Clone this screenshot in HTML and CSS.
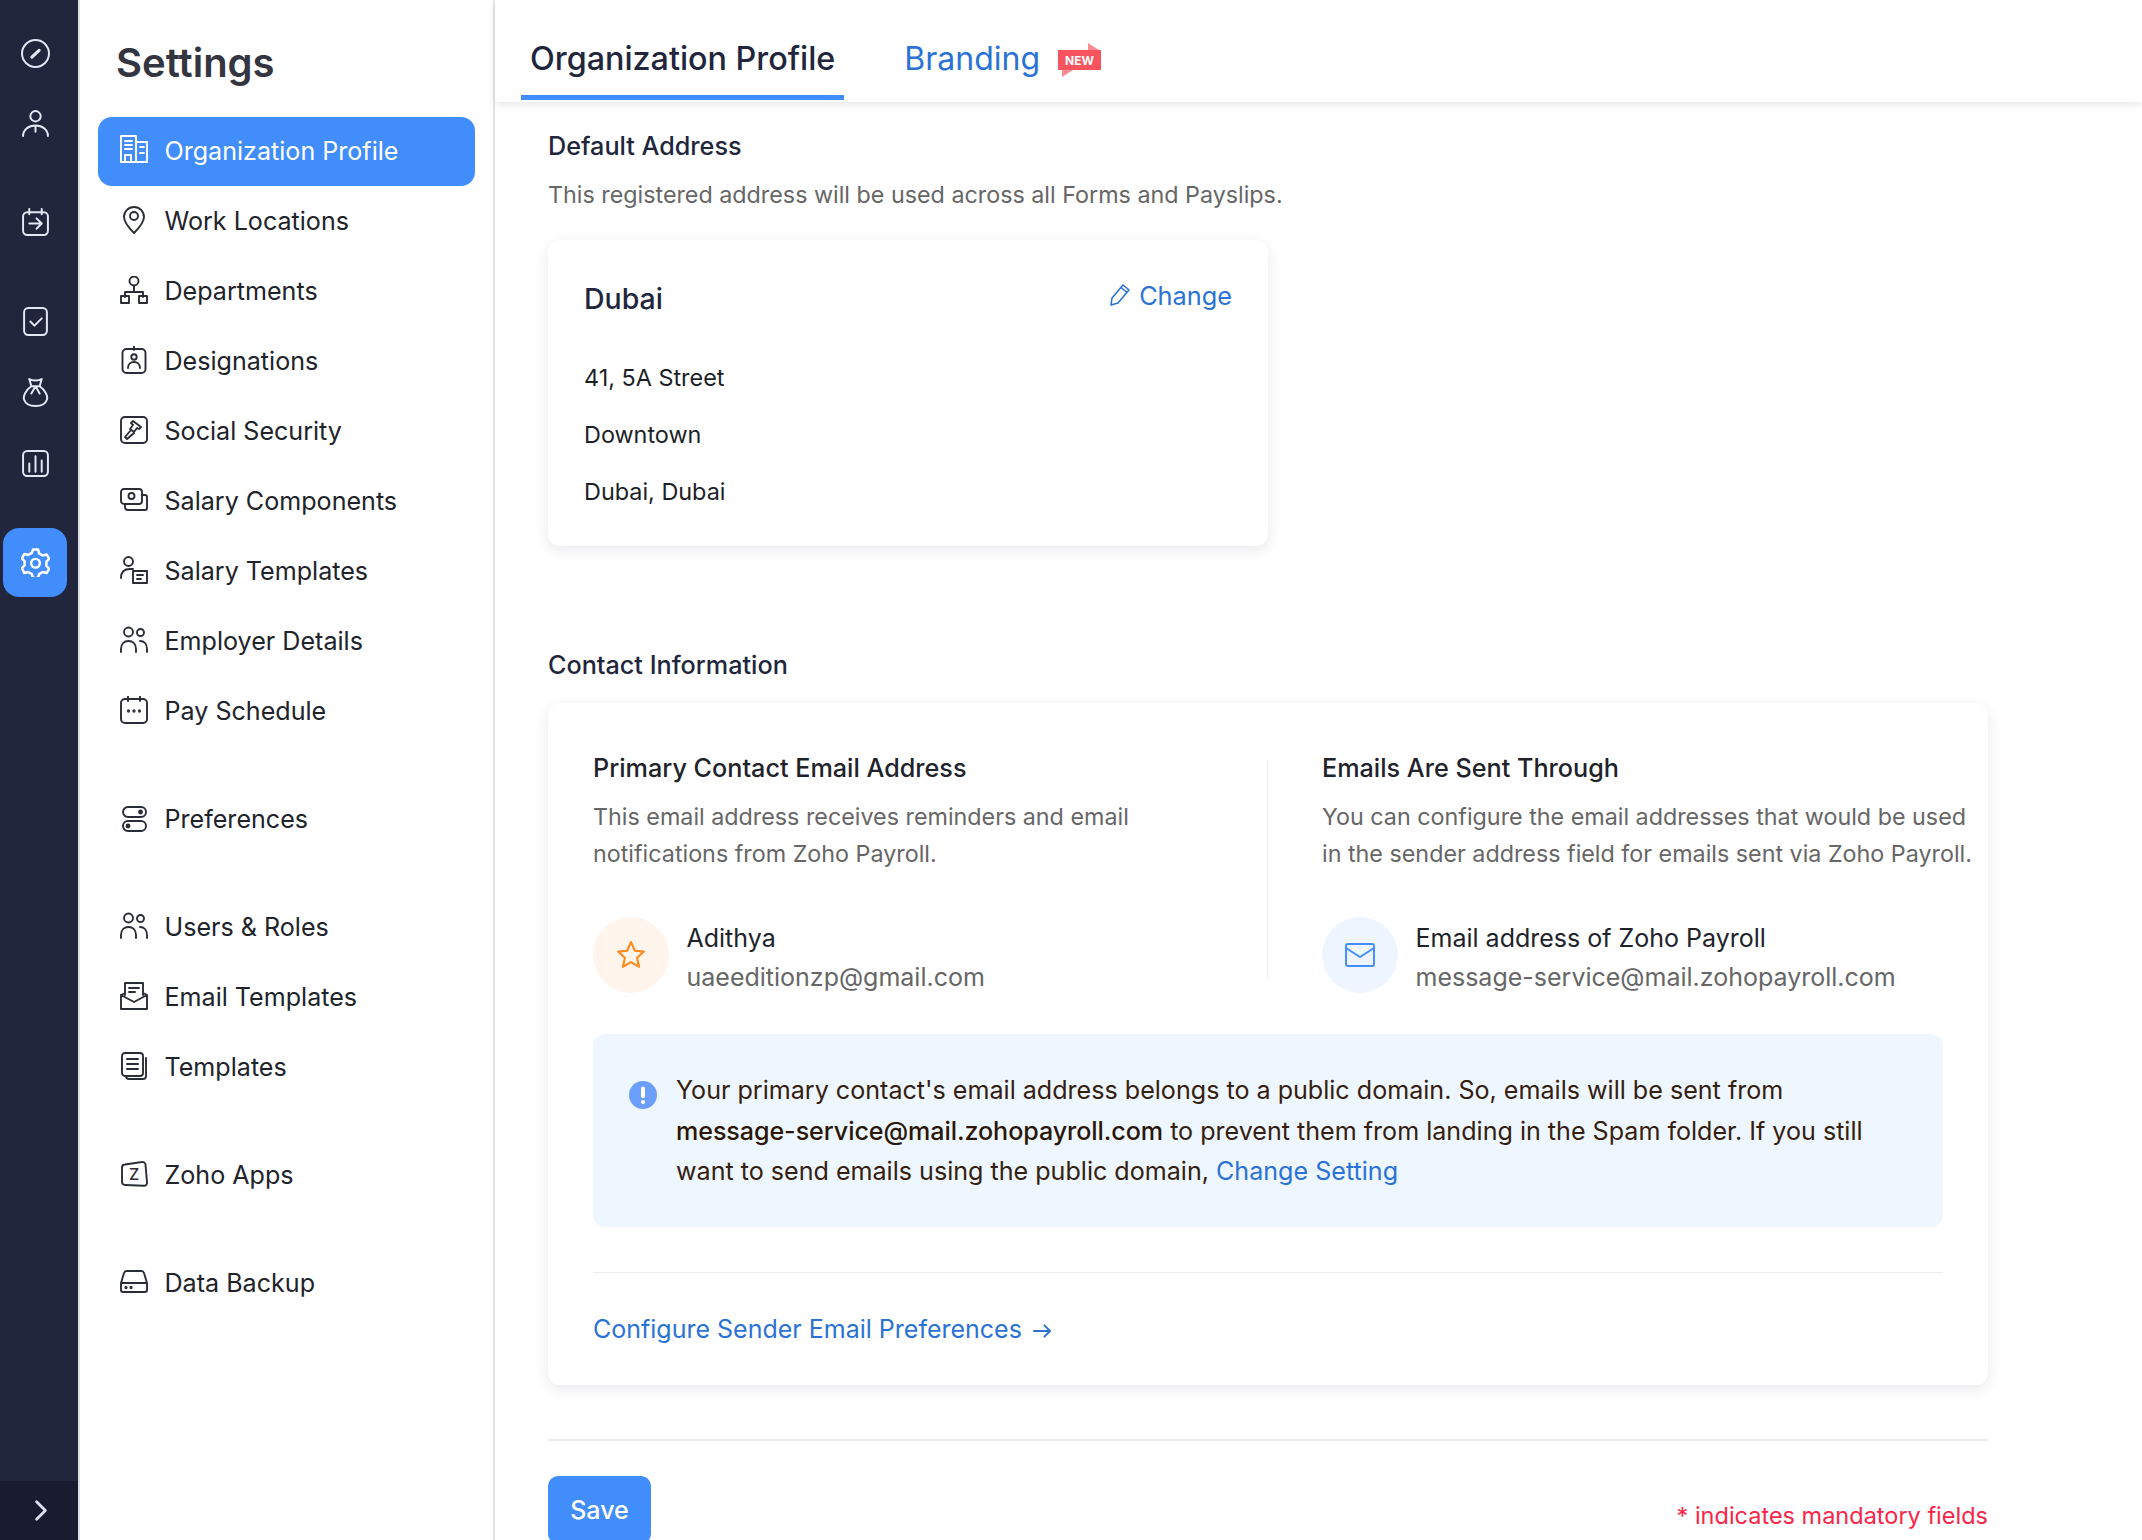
FILE: index.html
```html
<!DOCTYPE html>
<html lang="en">
<head>
<meta charset="utf-8">
<title>Settings</title>
<link rel="stylesheet" href="styles.css">
</head>
<body>
<div class="app">
  <aside class="rail">
    <div class="rail-group">
      <div class="rail-item"><svg viewBox="0 0 28 28"><circle cx="14" cy="14" r="13"/><path d="M10.5 17.500 17.500 11" class="thick"/></svg></div>
      <div class="rail-item"><svg viewBox="0 0 28 28"><circle cx="14" cy="7" r="5"/><path d="M2 26c0-6 5-10 12-10s12 4 12 10M14 16v6"/></svg></div>
    </div>
    <div class="rail-group">
      <div class="rail-item"><svg viewBox="0 0 28 28"><rect x="2" y="4" width="24" height="22" rx="4"/><path d="M8 1v5M20 1v5M8 15h12M15 10l5 5-5 5"/></svg></div>
    </div>
    <div class="rail-group rail-group-tall">
      <div class="rail-item"><svg viewBox="0 0 28 28"><rect x="3" y="1" width="22" height="26" rx="4"/><path d="M9 14l4 4 7-7"/></svg></div>
      <div class="rail-item"><svg viewBox="0 0 28 28"><path d="M8 1c3 2 9 2 12 0l-2 7c6 4 8 10 7 13s-4 6-11 6-10-3-11-6 1-9 7-13zM10 8h8M14 8l-4 7M14 8l4 7"/></svg></div>
      <div class="rail-item"><svg viewBox="0 0 28 28"><rect x="2" y="2" width="24" height="24" rx="4"/><path d="M8 22v-8M14 22V7M20 22V11"/></svg></div>
    </div>
    <div class="rail-group">
      <div class="rail-item rail-active"><svg viewBox="0 0 28 28"><path d="M11.5 1.500h5l1 3.700 3.500 2 3.700-1 2.500 4.300-2.700 2.700v4l2.700 2.700-2.500 4.300-3.700-1-3.500 2-1 3.700h-5l-1-3.700-3.500-2-3.700 1L.8 19.400l2.700-2.700v-4L.8 10l2.500-4.300 3.700 1 3.500-2z"/><circle cx="14" cy="14.700" r="4.200"/></svg></div>
    </div>
    <div class="rail-foot"><svg viewBox="0 0 16 24"><path d="M3 2l10 10L3 22"/></svg></div>
  </aside>

  <nav class="panel">
    <h1 class="panel-title">Settings</h1>
    <div class="nav-group">
      <a class="nav-item nav-active"><svg viewBox="0 0 28 28"><path d="M1 27V1h15v26M16 7h11v20H1M5 6h7M5 10h7M5 14h7M20 12h4M20 18h4M5 27v-7h6v7"/></svg>Organization Profile</a>
      <a class="nav-item"><svg viewBox="0 0 28 28"><path d="M14 27C9 22 4 16 4 11a10 10 0 0 1 20 0c0 5-5 11-10 16z"/><circle cx="14" cy="10" r="4"/></svg>Work Locations</a>
      <a class="nav-item"><svg viewBox="0 0 28 28"><circle cx="14" cy="5" r="4.500"/><path d="M14 10v6M5 21v-5h18v5"/><rect x="1" y="20" width="8" height="7"/><rect x="19" y="20" width="8" height="7"/></svg>Departments</a>
      <a class="nav-item"><svg viewBox="0 0 28 28"><rect x="2.500" y="3" width="23" height="24" rx="4"/><path d="M14 0v4M8 22c0-4 3-6 6-6s6 2 6 6"/><circle cx="14" cy="11" r="2.700"/></svg>Designations</a>
      <a class="nav-item"><svg viewBox="0 0 28 28"><rect x="1" y="1" width="26" height="26" rx="4"/><path d="M13 5l8 6-2 2-2-1-3 4-4-3 3-4-2-2zM11 14l-6 7 2 2 7-6"/></svg>Social Security</a>
      <a class="nav-item"><svg viewBox="0 0 28 28"><rect x="1" y="3" width="21" height="15" rx="3"/><circle cx="11.500" cy="10" r="3"/><path d="M22 9h3a2 2 0 0 1 2 2v11a2 2 0 0 1-2 2H8a3 3 0 0 1-3-3v-3"/></svg>Salary Components</a>
      <a class="nav-item"><svg viewBox="0 0 28 28"><circle cx="8.500" cy="5.500" r="4.500"/><path d="M1 22c0-6 3-9 9-9h3"/><rect x="13" y="15" width="14" height="12"/><path d="M17 19h6M17 23h4"/></svg>Salary Templates</a>
      <a class="nav-item"><svg viewBox="0 0 28 28"><circle cx="8.500" cy="6" r="4.500"/><circle cx="20.500" cy="6.500" r="3.500"/><path d="M1 26v-3c0-5 3-8 7.500-8s7.500 3 7.500 8v3M20 15c4 0 7 3 7 8v3"/></svg>Employer Details</a>
      <a class="nav-item"><svg viewBox="0 0 28 28"><rect x="1" y="3" width="26" height="24" rx="4"/><path d="M8 0v5M20 0v5"/><circle cx="8.500" cy="15" r=".7"/><circle cx="14" cy="15" r=".7"/><circle cx="19.500" cy="15" r=".7"/></svg>Pay Schedule</a>
    </div>
    <div class="nav-group">
      <a class="nav-item"><svg viewBox="0 0 28 28"><rect x="3" y="3" width="23" height="10" rx="5"/><rect x="3" y="17" width="23" height="10" rx="5"/><circle cx="20.500" cy="8" r="1.500" class="fill"/><circle cx="8" cy="22" r="1.500" class="fill"/></svg>Preferences</a>
    </div>
    <div class="nav-group">
      <a class="nav-item"><svg viewBox="0 0 28 28"><circle cx="8.500" cy="6" r="4.500"/><circle cx="20.500" cy="6.500" r="3.500"/><path d="M1 26v-3c0-5 3-8 7.500-8s7.500 3 7.500 8v3M20 15c4 0 7 3 7 8v3"/></svg>Users &amp; Roles</a>
      <a class="nav-item"><svg viewBox="0 0 28 28"><path d="M5 13V1h18v12M1 13v14h26V13l-4-2M5 11l-4 2M1 13l13 7 13-7M9 6h10M9 10h6"/></svg>Email Templates</a>
      <a class="nav-item"><svg viewBox="0 0 28 28"><rect x="2" y="1" width="21" height="23" rx="3"/><path d="M7 7h11M7 12h11M7 17h11M26 6v18a3 3 0 0 1-3 3H9a3 3 0 0 1-3-3"/></svg>Templates</a>
    </div>
    <div class="nav-group">
      <a class="nav-item"><svg viewBox="0 0 28 28"><path d="M5 4.500 22 2a3 3 0 0 1 3.500 2.500l1.500 18a3 3 0 0 1-3 3.300L5 25a3 3 0 0 1-3-3L2 7a3 3 0 0 1 3-2.500z"/><text x="14" y="20" class="zed">Z</text></svg>Zoho Apps</a>
    </div>
    <div class="nav-group">
      <a class="nav-item"><svg viewBox="0 0 28 28"><path d="M1 15v7a2 2 0 0 0 2 2h22a2 2 0 0 0 2-2v-7L24 5a3 3 0 0 0-3-2H7a3 3 0 0 0-3 2zM1 15h26"/><circle cx="6" cy="19.500" r=".7"/><circle cx="11" cy="19.500" r=".7"/></svg>Data Backup</a>
    </div>
  </nav>

  <main class="main">
    <header class="tabs">
      <a class="tab tab-active">Organization Profile</a>
      <a class="tab tab-link">Branding</a>
      <svg class="new-badge" viewBox="0 0 43 36"><path d="M30 8V1l11 7zM4 28v7l11-7z" class="badge-fold"/><rect y="8" width="43" height="20" class="badge-body"/><text x="21.500" y="23" class="badge-text">NEW</text></svg>
    </header>

    <div class="content">
      <h2 class="section-title">Default Address</h2>
      <p class="section-desc">This registered address will be used across all Forms and Payslips.</p>

      <section class="card address-card">
        <div class="address-head">
          <span class="address-name">Dubai</span>
          <a class="change-link"><svg viewBox="0 0 24 24"><path d="M3 22l1-7L15 2l6 5L10 20zM13 4.500l6 5"/></svg>Change</a>
        </div>
        <div class="address-lines">
          <div>41, 5A Street</div>
          <div>Downtown</div>
          <div>Dubai, Dubai</div>
        </div>
      </section>

      <h2 class="section-title contact-title">Contact Information</h2>

      <section class="card contact-card">
        <div class="contact-cols">
          <div class="contact-col">
            <h3 class="col-title">Primary Contact Email Address</h3>
            <p class="col-desc">This email address receives reminders and email<br>notifications from Zoho Payroll.</p>
            <div class="person">
              <span class="avatar avatar-star"><svg viewBox="0 0 28 28"><path d="M14 2l3.600 8 8.400.8-6.300 5.700 1.800 8.500L14 20.600 6.500 25l1.800-8.500L2 10.800l8.400-.8z"/></svg></span>
              <div class="person-text">
                <div class="person-name">Adithya</div>
                <div class="person-mail">uaeeditionzp@gmail.com</div>
              </div>
            </div>
          </div>
          <div class="col-rule"></div>
          <div class="contact-col contact-col-right">
            <h3 class="col-title">Emails Are Sent Through</h3>
            <p class="col-desc">You can configure the email addresses that would be used<br>in the sender address field for emails sent via Zoho Payroll.</p>
            <div class="person">
              <span class="avatar avatar-mail"><svg viewBox="0 0 30 26"><rect x="1" y="2" width="28" height="22" rx="2"/><path d="M1 6l14 9 14-9"/></svg></span>
              <div class="person-text">
                <div class="person-name">Email address of Zoho Payroll</div>
                <div class="person-mail">message-service@mail.zohopayroll.com</div>
              </div>
            </div>
          </div>
        </div>

        <div class="notice">
          <svg class="notice-icon" viewBox="0 0 28 28"><circle cx="14" cy="14" r="14"/><rect x="12" y="5.500" width="4" height="11.500" rx="2"/><circle cx="14" cy="21" r="2.100"/></svg>
          <p class="notice-text">Your primary contact's email address belongs to a public domain. So, emails will be sent from<br><strong>message-service@mail.zohopayroll.com</strong> to prevent them from landing in the Spam folder. If you still<br>want to send emails using the public domain, <a class="link">Change Setting</a></p>
        </div>

        <div class="card-foot">
          <a class="link configure">Configure Sender Email Preferences<svg viewBox="0 0 20 16"><path d="M1 8h17M12 2l6 6-6 6"/></svg></a>
        </div>
      </section>

      <div class="actions">
        <button class="save">Save</button>
        <span class="mandatory">* indicates mandatory fields</span>
      </div>
    </div>
  </main>
</div>
</body>
</html>
```

FILE: styles.css
```css
* { box-sizing: border-box; }
html, body { margin: 0; height: 1540px; overflow: hidden; background: #fff; }
body { font-family: Inter, "Liberation Sans", sans-serif; color: #21263c; }
h1, h2, h3, p { margin: 0; }
svg { display: block; fill: none; stroke: currentColor; stroke-width: 1.9; stroke-linecap: round; stroke-linejoin: round; flex: none; }

.app { display: flex; height: 1540px; }

/* icon rail */
.rail { width: 80px; flex: none; height: 100%; background: #21263c; border-right: 2px solid #dfe1e6; display: flex; flex-direction: column; padding-top: 18px; color: #e3e8f5; position: relative; }
.rail-group { display: flex; flex-direction: column; margin-bottom: 29px; }
.rail-item { width: 70px; height: 70px; display: flex; align-items: center; justify-content: center; }
.rail-group-tall .rail-item { height: 71px; }
.rail-item svg { width: 29px; height: 29px; stroke-width: 1.9; }
.rail-item .thick { stroke-width: 3; }
.rail-active { width: 64px; height: 69px; margin-left: 3px; background: #408dfb; border-radius: 16px; color: #fff; }
.rail-active svg { stroke-width: 2.4; }
.rail-foot { position: absolute; left: 0; bottom: 0; width: 78px; height: 59px; background: #191c30; display: flex; align-items: center; justify-content: center; padding-left: 4px; color: #dbe2f5; }
.rail-foot svg { width: 14px; height: 23px; stroke-width: 3.2; }

/* settings panel */
.panel { width: 415px; flex: none; height: 100%; border-right: 2px solid #e4e4e6; padding: 36px 18px 0; }
.panel-title { font-size: 40px; line-height: 54px; font-weight: 600; color: #333640; margin: 0 0 27px 18px; letter-spacing: 0; }
.nav-group { margin-bottom: 38px; }
.nav-item { display: flex; align-items: center; gap: 16.5px; height: 70px; padding: 0 22px 2px; font-size: 25.1px; color: #21232b; }
.nav-item svg { width: 28px; height: 28px; color: #2b2d36; margin-top: -3px; }
.nav-item .fill { fill: currentColor; }
.nav-item .zed { font-family: Inter, sans-serif; font-size: 16px; font-weight: 500; fill: currentColor; stroke: none; text-anchor: middle; }
.nav-active { height: 69px; margin-bottom: 1px; background: #408dfb; border-radius: 14px; color: #fff; }
.nav-active svg { color: #fff; }

/* main */
.main { flex: 1; min-width: 0; height: 100%; display: flex; flex-direction: column; }
.tabs { height: 102px; flex: none; display: flex; align-items: flex-start; padding-left: 26px; box-shadow: 0 3px 8px rgba(0, 0, 0, .09); position: relative; }
.tab { font-size: 32.3px; line-height: 40px; padding: 39px 9px 0; height: 100px; border-bottom: 5px solid transparent; font-weight: 500; }
.tab-active { color: #21263c; border-bottom-color: #408dfb; }
.tab-link { font-size: 32px; color: #2b72d6; font-weight: 400; margin-left: 60px; padding: 39px 0 0; border: 0; }
.new-badge { width: 43px; height: 36px; margin: 42px 0 0 18px; }
.badge-body { fill: #f8545f; stroke: none; }
.badge-fold { fill: #fb8c94; stroke: none; }
.badge-text { font-family: Inter, sans-serif; font-size: 12px; font-weight: 700; fill: #fff; stroke: none; text-anchor: middle; }

.content { padding: 26px 0 0 53px; width: 1494px; }
.section-title { font-size: 25.2px; line-height: 36px; font-weight: 500; color: #21263c; }
.section-desc { font-size: 23.3px; line-height: 36px; color: #666; margin: 13px 0 27px; }
.card { background: #fff; border-radius: 12px; box-shadow: 0 4px 14px rgba(30, 35, 60, .1); }

.address-card { width: 720px; height: 306px; padding: 41px 36px 0; }
.address-head { display: flex; justify-content: space-between; height: 36px; line-height: 36px; }
.address-name { font-size: 28.5px; font-weight: 500; color: #21263c; }
.change-link { display: flex; align-items: center; gap: 7px; font-size: 25.3px; color: #2b72d6; margin-top: -3px; height: 36px; }
.change-link svg { width: 24px; height: 24px; stroke-width: 1.6; margin-top: -2px; }
.address-lines { margin-top: 32px; font-size: 23.4px; line-height: 57px; color: #1d1f28; }

.contact-title { margin: 101px 0 20px; }
.contact-card { width: 1440px; height: 682px; padding: 47px 45px 0; }
.contact-cols { display: grid; grid-template-columns: 674px 1px 1fr; height: 243px; }
.col-rule { background: #f2f2f4; margin: 10px 0 18px; }
.contact-col-right { padding-left: 54px; white-space: nowrap; }
.col-title { font-size: 25.2px; line-height: 36px; font-weight: 500; color: #21232b; }
.col-desc { font-size: 23.3px; line-height: 37px; color: #666; margin: 12px 0 45px; }
.person { display: flex; gap: 17.5px; }
.avatar { width: 76px; height: 76px; border-radius: 50%; display: flex; align-items: center; justify-content: center; flex: none; }
.avatar-star { background: #fff5ec; color: #ff8a1e; }
.avatar-star svg { width: 30px; height: 30px; stroke-width: 2; }
.avatar-mail { background: #eef5ff; color: #408dfb; }
.avatar-mail svg { width: 30px; height: 26px; stroke-width: 1.9; }
.person-text { padding-top: 1.500px; line-height: 39.500px; }
.person-name { font-size: 25px; color: #21232b; }
.person-mail { font-size: 25px; color: #666; }

.notice { margin-top: 41px; height: 193px; background: #eef6ff; border-radius: 12px; padding: 36px 36px 0; display: flex; gap: 19px; }
.notice-icon { width: 28px; height: 28px; margin-top: 11px; stroke: none; }
.notice-icon circle:first-child { fill: #6c9ffb; }
.notice-icon rect, .notice-icon circle:last-child { fill: #fff; }
.notice-text { font-size: 25.1px; line-height: 40.5px; color: #35200f; white-space: nowrap; }
.notice-text strong { font-weight: 500; color: #2a1708; letter-spacing: -.07px; }
.link { color: #2b72d6; }

.card-foot { margin-top: 45px; border-top: 1px solid #ececee; padding-top: 38px; }
.configure { display: flex; align-items: center; gap: 11px; font-size: 25px; line-height: 36px; }
.configure svg { width: 19px; height: 16px; stroke-width: 2; margin-top: 3px; }

.actions { margin-top: 54px; border-top: 2px solid #ebebed; padding-top: 35px; display: flex; justify-content: space-between; width: 1440px; }
.save { width: 103px; height: 68px; background: #408dfb; color: #fff; border: 0; border-radius: 10px; font: 500 25px Inter, sans-serif; }
.mandatory { font-size: 23.5px; line-height: 36px; color: #fb2447; margin-top: 22px; }
```
